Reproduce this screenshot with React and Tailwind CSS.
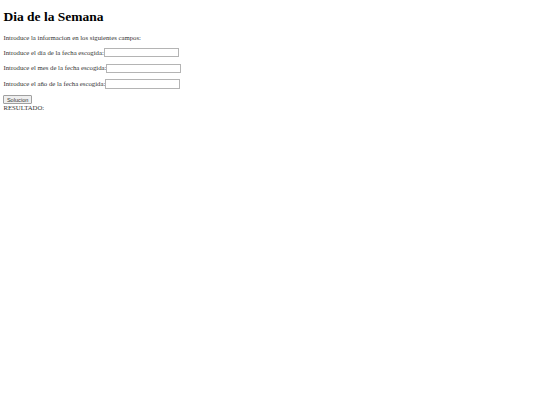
export default function App() {
  return (
    <div
      className="min-h-[405px] bg-white text-[#333] px-[3.4px] pt-[0.1px] text-[6.75px] leading-[1.15]"
      style={{ fontFamily: '"Liberation Serif", "Times New Roman", serif' }}
    >
      <h1 className="text-[13.5px] leading-[1.15] font-bold text-black mt-[9px] mb-[9px]">
        Dia de la Semana
      </h1>
      <p className="my-[6.75px]">Introduce la informacion en los siguientes campos:</p>
      <form>
        <p className="my-[6.75px] flex items-center h-[9px]">
          <label>Introduce el día de la fecha escogida:</label>
          <input
            type="text"
            className="w-[75px] h-[9.5px] border border-[#b4b4b4] bg-white"
          />
        </p>
        <p className="my-[6.75px] flex items-center h-[9px]">
          <label>Introduce el mes de la fecha escogida:</label>
          <input
            type="text"
            className="w-[75px] h-[9.5px] border border-[#b4b4b4] bg-white"
          />
        </p>
        <p className="my-[6.75px] flex items-center h-[9px]">
          <label>Introduce el año de la fecha escogida:</label>
          <input
            type="text"
            className="w-[75px] h-[9.5px] border border-[#b4b4b4] bg-white"
          />
        </p>
        <button
          type="button"
          className="block mt-[6.75px] h-[8.5px] px-[2.5px] text-[5.6px] leading-[6px] bg-[#efefef] border border-[#a0a0a0] rounded-[1px]"
          style={{ fontFamily: '"Liberation Sans", Arial, sans-serif' }}
        >
          Solucion
        </button>
      </form>
      <div>RESULTADO:</div>
    </div>
  );
}
